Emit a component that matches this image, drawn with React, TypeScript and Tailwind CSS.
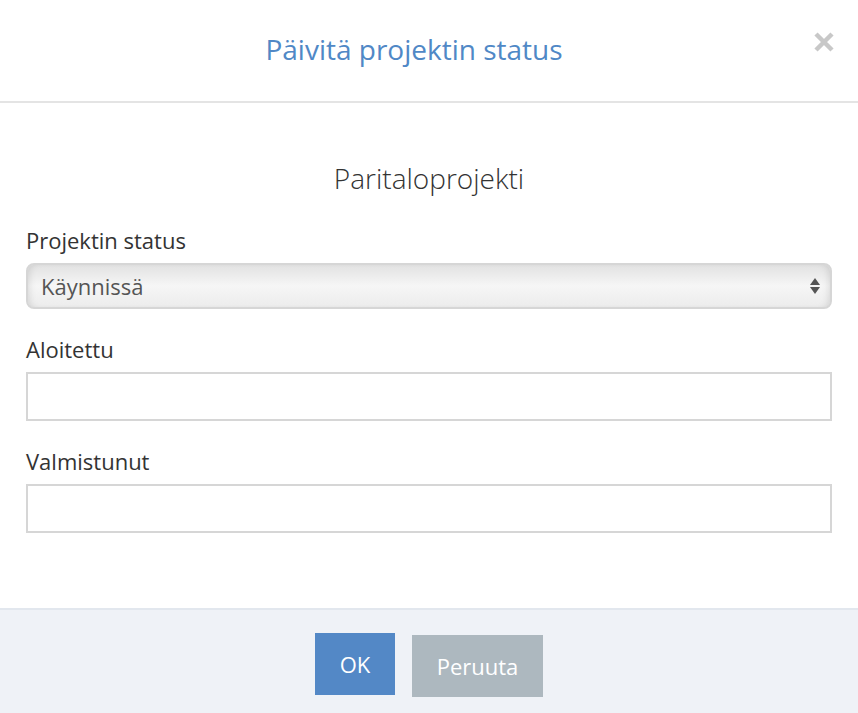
import { useState } from 'react'

const font = { fontFamily: '"Open Sans", "Liberation Sans", sans-serif' }

function Field({ label, children }: { label: string; children: React.ReactNode }) {
  return (
    <div className="flex flex-col">
      <label className="text-[22px] leading-[30px] text-[#333] mb-[8px]">{label}</label>
      {children}
    </div>
  )
}

export default function App() {
  const [status, setStatus] = useState('kaynnissa')

  return (
    <div className="w-[858px] h-[713px] bg-white flex flex-col" style={font}>
      {/* header */}
      <div className="relative h-[103px] border-b-2 border-[#e4e4e4] flex items-center justify-center shrink-0">
        <h1 className="text-[28px] text-[#5088c6] pr-[30px] -mt-[3px]">Päivitä projektin status</h1>
        <button className="absolute right-[23px] top-[31px]">
          <svg width="22" height="22" viewBox="0 0 22 22">
            <path d="M3 3 L19 19 M19 3 L3 19" stroke="#c8c8c8" strokeWidth="4.5" strokeLinecap="butt" />
          </svg>
        </button>
      </div>

      {/* body */}
      <div className="flex-1 px-[26px] pt-[56px]">
        <h2 className="text-center text-[28px] font-light text-[#333] leading-[38px]">Paritaloprojekti</h2>

        <div className="mt-[28px] flex flex-col gap-[25px]">
          <Field label="Projektin status">
            <div className="relative h-[46px] rounded-[8px] border-2 border-[#d6d6d6] bg-gradient-to-b from-[#e2e2e2] via-[#f6f6f6] to-[#ececec] shadow-[inset_-6px_0_8px_-6px_rgba(0,0,0,0.15),inset_6px_0_8px_-6px_rgba(0,0,0,0.15)]">
              <select
                value={status}
                onChange={(e) => setStatus(e.target.value)}
                className="appearance-none w-full h-full bg-transparent pl-[13px] text-[22px] text-[#555] outline-none"
              >
                <option value="kaynnissa">Käynnissä</option>
                <option value="valmis">Valmis</option>
              </select>
              <svg className="absolute right-[10px] top-[11px] pointer-events-none" width="10" height="20" viewBox="0 0 10 20">
                <path d="M5 2 L10 9 L0 9 Z" fill="#555" />
                <path d="M0 11 L10 11 L5 18 Z" fill="#555" />
              </svg>
            </div>
          </Field>

          <Field label="Aloitettu">
            <input className="h-[49px] border-2 border-[#d6d6d6] outline-none px-3 text-[20px]" />
          </Field>

          <Field label="Valmistunut">
            <input className="h-[49px] border-2 border-[#d6d6d6] outline-none px-3 text-[20px]" />
          </Field>
        </div>
      </div>

      {/* footer */}
      <div className="h-[105px] shrink-0 bg-[#eff2f7] border-t-2 border-[#e2e7ee] flex items-start justify-center gap-[17px] pt-[23px]">
        <button className="w-[80px] h-[62px] bg-[#5388c6] text-white text-[22px]">OK</button>
        <button className="w-[131px] h-[62px] mt-[2px] bg-[#adb8bf] text-white text-[22px]">Peruuta</button>
      </div>
    </div>
  )
}
